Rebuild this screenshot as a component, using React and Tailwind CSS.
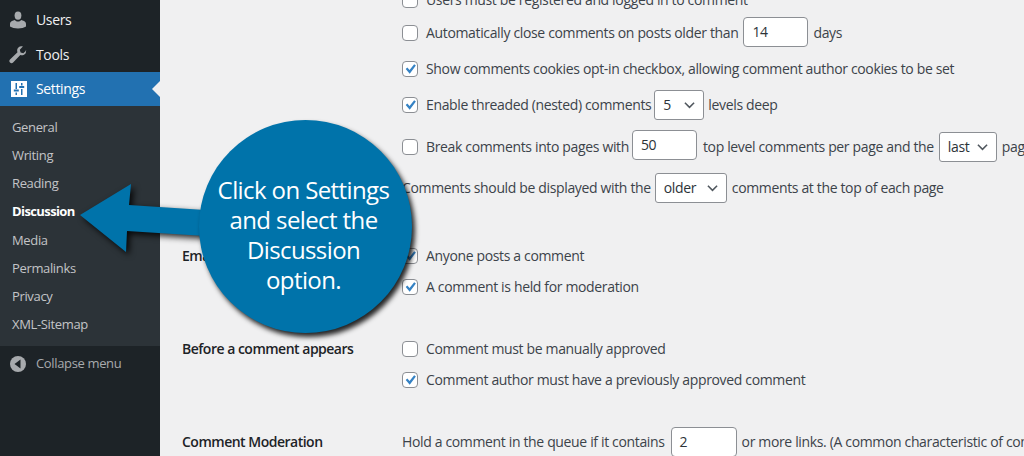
const UsersIcon = () => (
  <svg viewBox="0 0 18 18" className="w-[18px] h-[18px]" fill="#a7aaad">
    <ellipse cx="9" cy="4.6" rx="3.4" ry="4.2" />
    <path d="M1 15.5v-2.6c0-1.600 1.100-2.600 2.600-3.100l2.300-.8c.8 1 1.900 1.600 3.100 1.600s2.300-.6 3.100-1.600l2.300.8c1.500.5 2.600 1.500 2.600 3.100v2.600c-1.800 1.300-4.800 2-8 2s-6.200-.7-8-2z" />
  </svg>
)

const ToolsIcon = () => (
  <svg viewBox="0 0 18 18" className="w-[18px] h-[18px]" fill="#a7aaad">
    <path d="M17.500 4.200l-3.200 3-2.700-.8-.8-2.700 3.100-3.100c-1.500-.6-3.300-.3-4.500.9-1.300 1.300-1.600 3.100-.9 4.700L1 13.400c-.9.9-.9 2.200 0 3.100s2.200.9 3.100 0l7.200-7.500c1.600.6 3.400.3 4.700-1 1.100-1.100 1.400-2.800.5-3.800z" />
  </svg>
)

const SettingsIcon = () => (
  <svg viewBox="0 0 16 16" className="w-4 h-4">
    <rect width="16" height="16" fill="#ffffff" />
    <path d="M4.500 2h1.500v6H4.500zM4.500 11.500h1.500V14H4.500zM10 2h1.500v2.500H10zM10 8h1.500v6H10z" fill="#2271b1" />
    <path d="M2.800 8.500h5v2h-5zM8.200 5h5v2h-5z" fill="#2271b1" />
  </svg>
)

const CollapseIcon = () => (
  <svg viewBox="0 0 16 16" className="w-4 h-4">
    <circle cx="8" cy="8" r="8" fill="#a7aaad" />
    <path d="M10.500 3.500v9L4.500 8z" fill="#1d2327" />
  </svg>
)

const Checkbox = ({ checked }) => (
  <span className="w-4 h-4 shrink-0 mr-2 rounded-[4px] border border-[#8c8f94] bg-white flex items-center justify-center">
    {checked && (
      <svg viewBox="1.500 1.500 11 10.500" className="w-[13px] h-[12px]">
        <path d="M2.800 6.800l1.400-1.300 2 2.200 4-5.200 1.500 1.100-5.400 7.300z" fill="#3582c4" />
      </svg>
    )}
  </span>
)

const NumberBox = ({ value, className }) => (
  <span className={`h-[30px] shrink-0 rounded-[4px] border border-[#8c8f94] bg-white pl-2 flex items-center text-[#2c3338] ${className}`}>
    {value}
  </span>
)

const SelectBox = ({ value, className }) => (
  <span className={`h-[30px] shrink-0 rounded-[3px] border border-[#8c8f94] bg-white pl-2 pr-2 flex items-center justify-between text-[#2c3338] ${className}`}>
    {value}
    <svg viewBox="0 0 12 8" className="w-[11px] h-2" fill="none" stroke="#50575e" strokeWidth="1.700">
      <path d="M1 1.500l5 5 5-5" />
    </svg>
  </span>
)

const subItems = ['General', 'Writing', 'Reading', 'Discussion', 'Media', 'Permalinks', 'Privacy', 'XML-Sitemap']

const Sidebar = () => (
  <aside className="w-40 shrink-0 bg-[#1d2327] flex flex-col text-sm">
    <div className="h-[38px] pt-[2px] flex items-center text-[#f0f0f1]">
      <span className="w-9 pl-[9px]"><UsersIcon /></span>Users
    </div>
    <div className="h-[34px] flex items-center text-[#f0f0f1]">
      <span className="w-9 pl-[9px]"><ToolsIcon /></span>Tools
    </div>
    <div className="relative h-[34px] bg-[#2271b1] flex items-center text-white">
      <span className="w-9 pl-[11px]"><SettingsIcon /></span>Settings
      <span className="absolute right-0 top-[9px] border-y-[8px] border-y-transparent border-r-[8px] border-r-[#f0f0f1]" />
    </div>
    <div className="bg-[#2c3338] py-[7px] text-[13px] text-[#c3c4c7]">
      {subItems.map((item) => (
        <div key={item} className={`h-[28.2px] pl-3 flex items-center ${item === 'Discussion' ? 'font-bold text-white tracking-[-0.6px]' : ''}`}>
          {item}
        </div>
      ))}
    </div>
    <div className="h-[34px] pt-[2px] flex items-center text-[13px] text-[#a7aaad] tracking-[-0.35px]">
      <span className="w-9 pl-[10px]"><CollapseIcon /></span>Collapse menu
    </div>
  </aside>
)

const Row = ({ className = '', children }) => (
  <div className={`h-6 flex items-center whitespace-nowrap ${className}`}>{children}</div>
)

const Section = ({ label, className = '', children }) => (
  <div className={`flex ${className}`}>
    <div className="w-[220px] shrink-0 h-6 flex items-center font-semibold text-[#1d2327] whitespace-nowrap tracking-[-0.5px]">{label}</div>
    <div>{children}</div>
  </div>
)

const Callout = () => (
  <div className="absolute inset-0 pointer-events-none">
    <svg viewBox="0 0 1024 456" className="absolute inset-0 w-[1024px] h-[456px] drop-shadow-[3px_3px_3px_rgba(0,0,0,0.85)]">
      <path d="M80 215L131 184L129 205L205 210V236L127 231L126 252Z" fill="#0073aa" />
    </svg>
    <div className="absolute left-[199px] top-[120px] w-[213px] h-[213px] pt-4 pr-1 rounded-full bg-[#0073aa] shadow-[3px_4px_5px_rgba(0,0,0,0.85)] flex flex-col items-center justify-center text-white text-[24px] leading-[30px] tracking-[-0.6px]">
      <span>Click on Settings</span>
      <span>and select the</span>
      <span>Discussion</span>
      <span>option.</span>
    </div>
  </div>
)

export default function App() {
  return (
    <div className="relative w-[1024px] h-[456px] overflow-hidden flex bg-[#f0f0f1] text-sm text-[#3c434a] font-['Open_Sans',sans-serif] tracking-[-0.35px]">
      <Sidebar />
      <main className="flex-1 pl-[22px] -mt-3">
        <Section label="">
          <Row><Checkbox />Users must be registered and logged in to comment</Row>
          <Row className="mt-[9px]">
            <Checkbox />Automatically close comments on posts older than
            <NumberBox value="14" className="w-[65px] ml-[5px] mr-[5px] -mt-[2px]" />days
          </Row>
          <Row className="mt-3"><Checkbox checked />Show comments cookies opt-in checkbox, allowing comment author cookies to be set</Row>
          <Row className="mt-3">
            <Checkbox checked />Enable threaded (nested) comments
            <SelectBox value="5" className="w-[50px] ml-[3px] mr-1" />levels deep
          </Row>
          <Row className="mt-[18px]">
            <Checkbox />Break comments into pages with
            <NumberBox value="50" className="w-[65px] ml-[3px] mr-[6px] -mt-1" />top level comments per page and the
            <SelectBox value="last" className="w-[58px] mx-[5px]" />page displayed by default
          </Row>
          <Row className="mt-[17px]">
            Comments should be displayed with the
            <SelectBox value="older" className="w-[72px] ml-1 mr-[5px]" />comments at the top of each page
          </Row>
        </Section>
        <Section label="Email me whenever" className="mt-[44px]">
          <Row><Checkbox checked />Anyone posts a comment</Row>
          <Row className="mt-[7px]"><Checkbox checked />A comment is held for moderation</Row>
        </Section>
        <Section label="Before a comment appears" className="mt-[38px]">
          <Row><Checkbox />Comment must be manually approved</Row>
          <Row className="mt-[7px]"><Checkbox checked />Comment author must have a previously approved comment</Row>
        </Section>
        <Section label="Comment Moderation" className="mt-[38px]">
          <Row>
            Hold a comment in the queue if it contains
            <NumberBox value="2" className="w-[66px] ml-[6px] mr-[5px]" />or more links. (A common characteristic of comment spam is a large number of hyperlinks.)
          </Row>
        </Section>
      </main>
      <Callout />
    </div>
  )
}
